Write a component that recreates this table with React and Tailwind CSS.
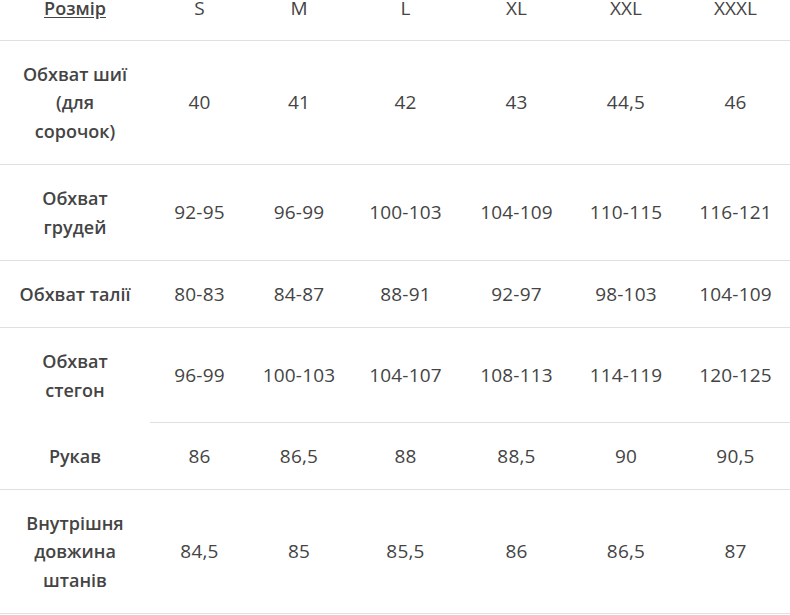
import React from "react";

const sizes = ["S", "M", "L", "XL", "XXL", "XXXL"];

const rows = [
  { label: ["Обхват шиї", "(для", "сорочок)"], values: ["40", "41", "42", "43", "44,5", "46"], h: "h-[124px]" },
  { label: ["Обхват", "грудей"], values: ["92-95", "96-99", "100-103", "104-109", "110-115", "116-121"], h: "h-[96px]" },
  { label: ["Обхват талії"], values: ["80-83", "84-87", "88-91", "92-97", "98-103", "104-109"], h: "h-[67px]" },
  { label: ["Обхват", "стегон"], values: ["96-99", "100-103", "104-107", "108-113", "114-119", "120-125"], h: "h-[95px]", noLabelBorder: true },
  { label: ["Рукав"], values: ["86", "86,5", "88", "88,5", "90", "90,5"], h: "h-[67px]" },
  { label: ["Внутрішня", "довжина", "штанів"], values: ["84,5", "85", "85,5", "86", "86,5", "87"], h: "h-[124px]" },
];

const cols = "grid grid-cols-[150px_99px_100px_113px_109px_110px_109px]";

export default function App() {
  return (
    <div className="w-[790px] h-[615px] overflow-hidden bg-white text-[#444] font-['Open_Sans',sans-serif]">
      {/* Header row, partly cut off at the top */}
      <div className={`${cols} -mt-[23px] h-[64px] border-b border-[#e0e0e0]`}>
        <div className="flex items-center justify-center text-[18px] font-semibold underline underline-offset-2">
          Розмір
        </div>
        {sizes.map((s) => (
          <div key={s} className="flex items-center justify-center text-[19px]">
            {s}
          </div>
        ))}
      </div>

      {rows.map((row, i) => (
        <div key={i} className={`${cols} ${row.h}`}>
          <div
            className={`flex flex-col items-center justify-center text-[18px] font-semibold leading-[28.5px] text-center ${
              row.noLabelBorder ? "" : "border-b border-[#e0e0e0]"
            }`}
          >
            {row.label.map((l) => (
              <span key={l}>{l}</span>
            ))}
          </div>
          {row.values.map((v, j) => (
            <div key={j} className="flex items-center justify-center text-[19px] tracking-[0.2px] border-b border-[#e0e0e0]">
              {v}
            </div>
          ))}
        </div>
      ))}
    </div>
  );
}
